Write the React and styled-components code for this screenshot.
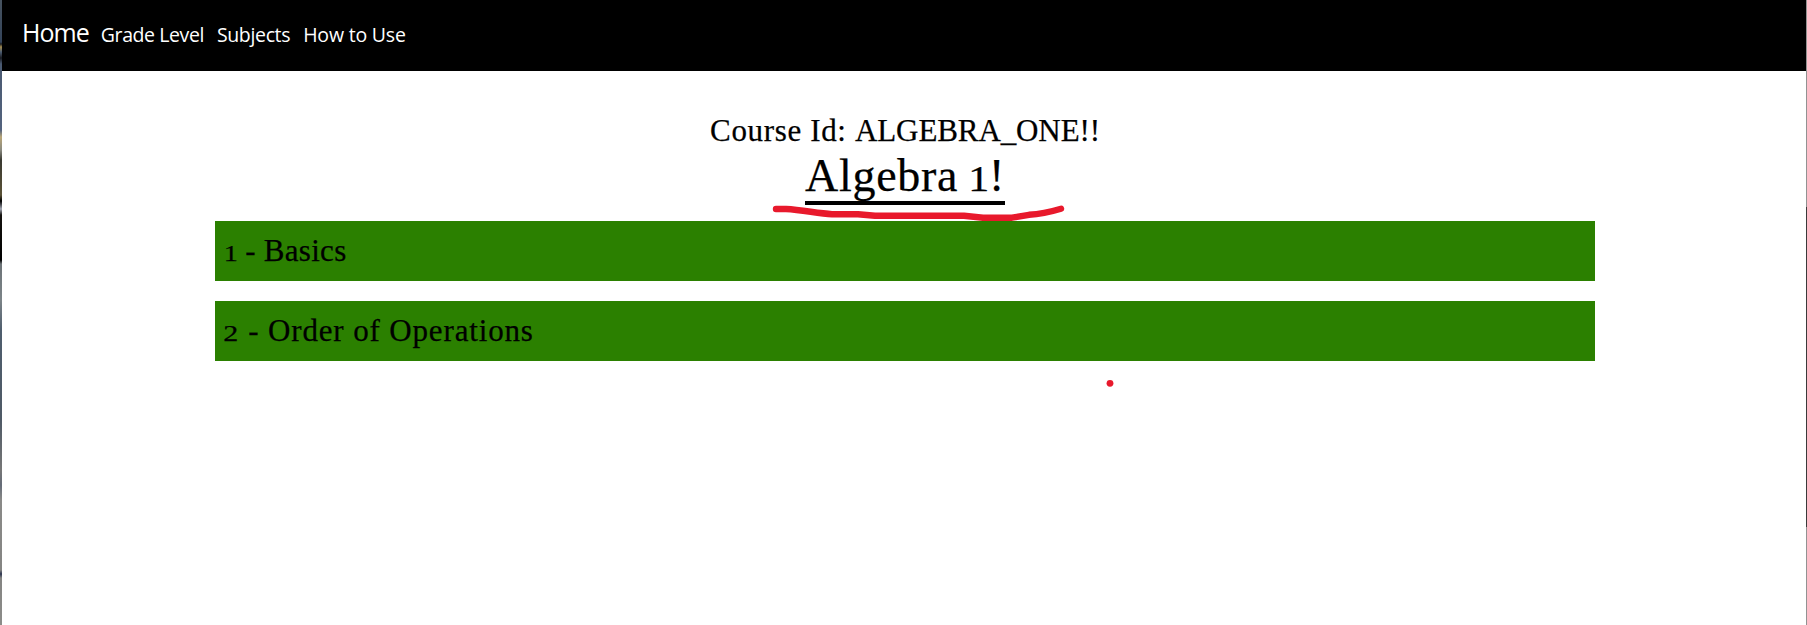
import React from "react";
import styled, { createGlobalStyle } from "styled-components";

const GlobalStyle = createGlobalStyle`
  * { box-sizing: border-box; }
  body { margin: 0; background: #fff; }
`;

const Window = styled.div`
  position: relative;
  display: flex;
  height: 625px;
  overflow: hidden;
`;

const LeftEdge = styled.div`
  width: 2px;
  background: linear-gradient(#46525f 0, #34445a 42px, #1a1c20 44px, #a08a50 47px, #4b5b70 52px,
    #17191f 58px, #4a5a72 64px, #53637e 130px, #b9a678 137px, #8a8a80 150px, #3a3a32 160px,
    #5a5236 195px, #000 201px, #a5a9b5 209px, #15130f 215px, #000 260px, #6d7478 264px,
    #7c8488 300px, #4f5e6e 330px, #4f5a66 420px, #777 470px, #656c78 485px, #8a8a88 500px,
    #858583 570px, #2c3550 574px, #858583 578px, #8c8c89 625px);
`;

const RightEdge = styled.div`
  width: 1px;
  background: linear-gradient(#929292 207px, #3a3a3a 207px, #3a3a3a 527px, #929292 527px);
`;

const Page = styled.div`
  flex: 1;
  display: flex;
  flex-direction: column;
`;

const Nav = styled.nav`
  display: flex;
  align-items: baseline;
  height: 71px;
  padding: 15px 20px 0;
  background: #000;
  font-family: "Open Sans", sans-serif;
  line-height: 34px;
`;

const NavLink = styled.a`
  margin-right: ${(p) => (p.$brand ? 12 : 13)}px;
  color: #fff;
  font-size: ${(p) => (p.$brand ? 25 : 19.5)}px;
  letter-spacing: ${(p) => p.$track}px;
  white-space: nowrap;
`;

const Main = styled.main`
  width: 1380px;
  margin: 40px 211px 0 213px;
  color: #000;
  font-family: "Liberation Serif", serif;
  font-size: 31px;
  -webkit-text-stroke: 0.25px #000;
`;

const Header = styled.header`
  display: flex;
  flex-direction: column;
  align-items: center;
  height: 110px;
`;

const CourseId = styled.div`
  line-height: 40px;
  letter-spacing: 0.65px;
  white-space: nowrap;
`;

const Code = styled.span`
  letter-spacing: -0.1px;
`;

const Title = styled.h1`
  height: 54px;
  margin: 0;
  border-bottom: 4px solid #000;
  font-size: 46px;
  font-weight: 400;
  line-height: 50px;
  letter-spacing: 0.68px;
  white-space: nowrap;
`;

const Numeral = styled.span`
  display: inline-block;
  margin-right: ${(p) => p.$space || 0}px;
  font-size: 0.76em;
  line-height: 1;
  transform: scaleX(${(p) => p.$stretch || 1.2});
`;

const Unit = styled.section`
  height: 60px;
  margin-bottom: 20px;
  padding: 0 10px;
  background: #2b8000;
  line-height: 60px;
  letter-spacing: ${(p) => p.$track}px;
`;

const Ink = styled.svg`
  position: absolute;
  left: 0;
  top: 0;
  pointer-events: none;
`;

export default function App() {
  return (
    <>
      <GlobalStyle />
      <Window>
        <LeftEdge />
        <Page>
          <Nav>
            <NavLink $brand $track={-0.95}>Home</NavLink>
            <NavLink $track={-0.42}>Grade Level</NavLink>
            <NavLink $track={-0.35}>Subjects</NavLink>
            <NavLink $track={-0.2}>How to Use</NavLink>
          </Nav>
          <Main>
            <Header>
              <CourseId>Course Id: <Code>ALGEBRA_ONE!!</Code></CourseId>
              <Title>Algebra <Numeral $space={0.5}>1</Numeral>!</Title>
            </Header>
            <Unit $track={0.3}><Numeral>1</Numeral> - Basics</Unit>
            <Unit $track={0.85}><Numeral $space={2} $stretch={1.28}>2</Numeral> - Order of Operations</Unit>
          </Main>
        </Page>
        <RightEdge />
        <Ink width="1807" height="625" fill="none">
          <path d="M776 209H786C803 210 818 213.5 832 214.2H858L875 215.7H964L983 217.7H1012L1029 214.8C1043 214 1050 212 1061 208.7" stroke="#e8192c" strokeWidth="6.4" strokeLinecap="round" strokeLinejoin="round" />
          <circle cx="1110" cy="383.3" r="3.4" fill="#e8192c" />
        </Ink>
      </Window>
    </>
  );
}
